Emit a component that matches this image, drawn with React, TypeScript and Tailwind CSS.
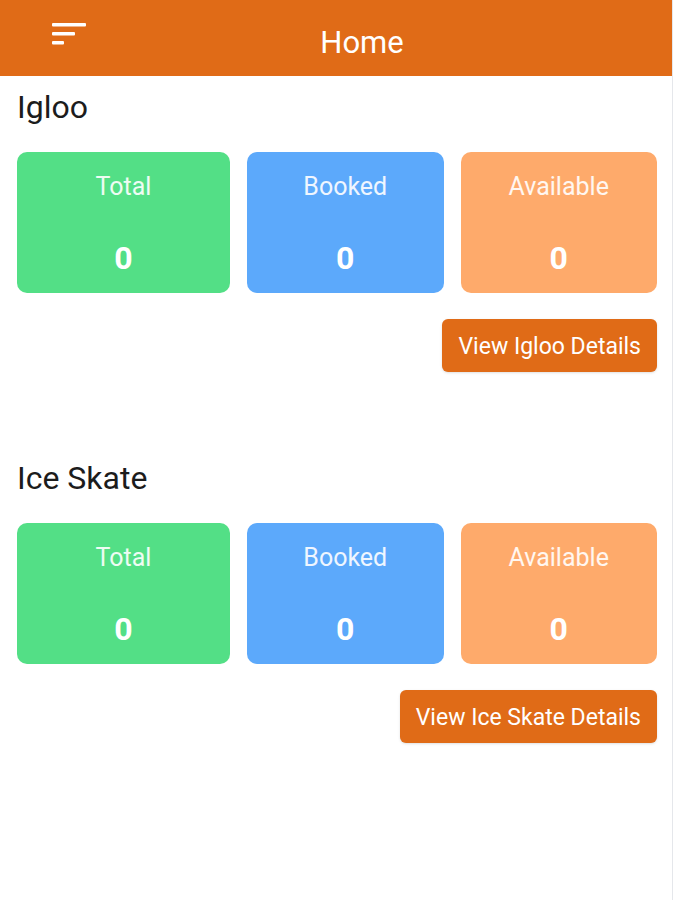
import React from "react";

const SECTIONS = [
  { name: "Igloo", total: 0, booked: 0, available: 0 },
  { name: "Ice Skate", total: 0, booked: 0, available: 0 },
];

function MenuIcon() {
  return (
    <svg width="36" height="24" viewBox="0 0 36 24" aria-hidden="true">
      <rect x="1" y="1" width="34" height="3.5" rx="1" fill="white" />
      <rect x="1" y="10" width="23" height="3.5" rx="1" fill="white" />
      <rect x="1" y="19" width="12" height="3.5" rx="1" fill="white" />
    </svg>
  );
}

function StatCard({ label, value, color }: { label: string; value: number; color: string }) {
  return (
    <div className={`flex h-[141px] flex-col items-center rounded-[10px] pt-[19px] ${color}`}>
      <span className="text-[25px] leading-[32px] text-white/90">{label}</span>
      <span className="mt-[37px] text-[32px] font-bold leading-[36px] text-white">{value}</span>
    </div>
  );
}

export default function App() {
  return (
    <div className="flex min-h-[900px] bg-white font-['Roboto','Liberation_Sans',sans-serif]">
      <div className="w-[672px]">
        {/* Top bar */}
        <header className="relative flex h-[76px] items-center justify-center bg-[#e06b17]">
          <button className="absolute left-[51px] top-[22px]" aria-label="Menu">
            <MenuIcon />
          </button>
          <h1 className="pl-[52px] pt-[8px] text-[31px] leading-none text-white">Home</h1>
        </header>

        <main className="pl-[17px] pr-[15px]">
          {SECTIONS.map((s, i) => (
            <section key={s.name} className={i === 0 ? "pt-[13px]" : "pt-[88px]"}>
              <h2 className="text-[32px] leading-[36px] text-[#1c1c1c]">{s.name}</h2>
              <div className="mt-[27px] grid grid-cols-[213px_1fr_1fr] gap-[17px]">
                <StatCard label="Total" value={s.total} color="bg-[#53df86]" />
                <StatCard label="Booked" value={s.booked} color="bg-[#5ca9fb]" />
                <StatCard label="Available" value={s.available} color="bg-[#feaa6b]" />
              </div>
              <div className="mt-[26px] flex justify-end">
                <button className="h-[53px] rounded-[6px] bg-[#e06b17] px-[16px] pt-[3px] text-[23px] text-white shadow-sm">
                  View {s.name} Details
                </button>
              </div>
            </section>
          ))}
        </main>
      </div>
      {/* edge of the next screen */}
      <div className="w-[3px] border-l border-gray-200 bg-white" />
    </div>
  );
}
